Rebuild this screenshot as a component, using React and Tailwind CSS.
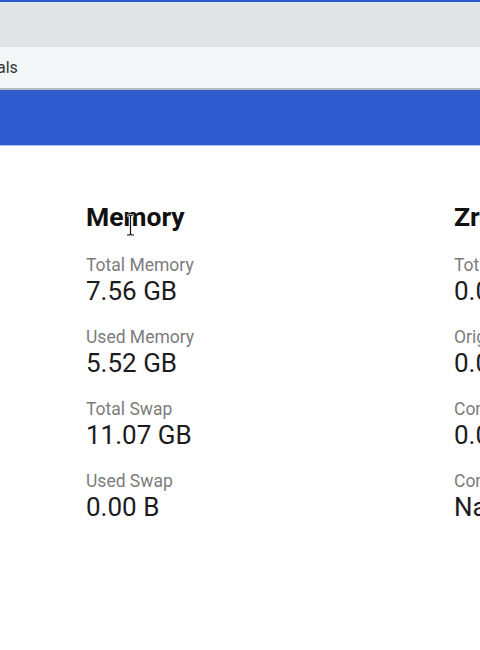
import React from 'react';

const memory = [
  { label: 'Total Memory', value: '7.56 GB' },
  { label: 'Used Memory', value: '5.52 GB' },
  { label: 'Total Swap', value: '11.07 GB' },
  { label: 'Used Swap', value: '0.00 B' },
];

const zram = [
  { label: 'Total Zram', value: '0.00 B' },
  { label: 'Original Data', value: '0.00 B' },
  { label: 'Compressed Data', value: '0.00 B' },
  { label: 'Compression Ratio', value: 'NaN' },
];

function Stat({ label, value }) {
  return (
    <div className="flex flex-col">
      <span className="text-[17.5px] leading-[21px] text-[#7c7c7c]">{label}</span>
      <span className="text-[26px] leading-[30px] text-[#1c1c1c]">{value}</span>
    </div>
  );
}

function Section({ title, items }) {
  return (
    <div className="w-[368px] shrink-0">
      <h2 className="text-[26.5px] font-bold leading-[30px] text-[#111]">{title}</h2>
      <div className="mt-[23px] flex flex-col gap-[21px]">
        {items.map((it) => (
          <Stat key={it.label} {...it} />
        ))}
      </div>
    </div>
  );
}

export default function App() {
  return (
    <div className="relative h-[650px] w-[480px] overflow-hidden bg-white font-['Roboto',sans-serif]">
      {/* Browser chrome */}
      <div className="h-[2px] bg-[#2f5bcc]" />
      <div className="h-[45px] bg-[#e1e5e8]" />
      <div className="flex h-[41px] items-center bg-[#f4f7f8]">
        <span className="ml-[-3px] text-[16px] text-[#333]">als</span>
      </div>
      <div className="h-[2px] bg-[#b5bcbc]" />

      {/* App header */}
      <div className="h-[55px] bg-[#2e5bcd]" />
      <div className="h-px bg-[#a7bdec]" />

      {/* Content */}
      <div className="flex pl-[86px] pt-[56px]">
        <Section title="Memory" items={memory} />
        <Section title="Zram" items={zram} />
      </div>

      {/* Text cursor */}
      <svg className="absolute left-[126px] top-[214px]" width="9" height="22" viewBox="0 0 9 22">
        <path d="M1 1h2.5L4.5 2 5.5 1H8M4.5 2v18M1 21h2.5l1-1 1 1H8" fill="none" stroke="#fff" strokeWidth="3" />
        <path d="M1 1h2.5L4.5 2 5.5 1H8M4.5 2v18M1 21h2.5l1-1 1 1H8" fill="none" stroke="#111" strokeWidth="1.2" />
      </svg>
    </div>
  );
}
